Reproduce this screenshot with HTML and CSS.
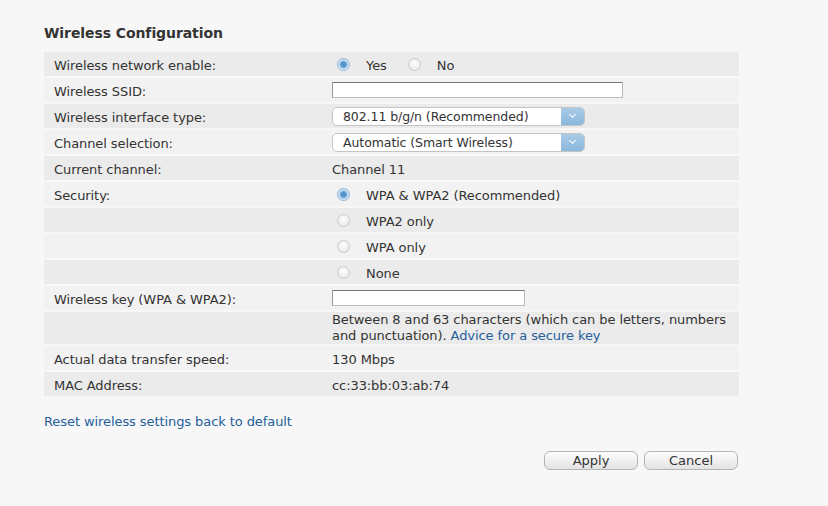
FILE: index.html
```html
<!DOCTYPE html>
<html lang="en">
<head>
    <meta charset="UTF-8">
    <title>Wireless Configuration</title>
    <link rel="stylesheet" href="styles.css">
</head>
<body>
    <div class="page">
        <h2>Wireless Configuration</h2>
        <div class="settings">
            <div class="row dark">
                <div class="label">Wireless network enable:</div>
                <div class="value">
                    <span class="radio on"></span><span class="opt">Yes</span>
                    <span class="radio"></span><span class="opt">No</span>
                </div>
            </div>
            <div class="row">
                <div class="label">Wireless SSID:</div>
                <div class="value"><span class="input ssid"></span></div>
            </div>
            <div class="row dark">
                <div class="label">Wireless interface type:</div>
                <div class="value">
                    <span class="select"><span class="select-text">802.11 b/g/n (Recommended)</span><span class="select-btn"></span></span>
                </div>
            </div>
            <div class="row">
                <div class="label">Channel selection:</div>
                <div class="value">
                    <span class="select"><span class="select-text">Automatic (Smart Wireless)</span><span class="select-btn"></span></span>
                </div>
            </div>
            <div class="row dark">
                <div class="label">Current channel:</div>
                <div class="value">Channel 11</div>
            </div>
            <div class="row">
                <div class="label">Security:</div>
                <div class="value"><span class="radio on"></span><span class="opt">WPA &amp; WPA2 (Recommended)</span></div>
            </div>
            <div class="row dark">
                <div class="label"></div>
                <div class="value"><span class="radio"></span><span class="opt">WPA2 only</span></div>
            </div>
            <div class="row">
                <div class="label"></div>
                <div class="value"><span class="radio"></span><span class="opt">WPA only</span></div>
            </div>
            <div class="row dark">
                <div class="label"></div>
                <div class="value"><span class="radio"></span><span class="opt">None</span></div>
            </div>
            <div class="row">
                <div class="label">Wireless key (WPA &amp; WPA2):</div>
                <div class="value"><span class="input key"></span></div>
            </div>
            <div class="row dark tall">
                <div class="label"></div>
                <div class="value">Between 8 and 63 characters (which can be letters, numbers and punctuation). <a href="#">Advice for a secure key</a></div>
            </div>
            <div class="row">
                <div class="label">Actual data transfer speed:</div>
                <div class="value">130 Mbps</div>
            </div>
            <div class="row dark">
                <div class="label">MAC Address:</div>
                <div class="value">cc:33:bb:03:ab:74</div>
            </div>
        </div>
        <a class="reset" href="#">Reset wireless settings back to default</a>
        <div class="buttons">
            <button>Apply</button>
            <button>Cancel</button>
        </div>
    </div>
</body>
</html>
```

FILE: styles.css
```css
body {
    margin: 0;
    background-color: #f7f7f7;
    font-family: "DejaVu Sans", Verdana, sans-serif;
    font-size: 13px;
    letter-spacing: -0.08px;
    color: #333;
}
.page {
    width: 695px;
    padding: 24px 0 0 44px;
}
h2 {
    font-size: 14px;
    line-height: 18px;
    margin: 0 0 10px 0;
    color: #333;
}
.row {
    display: flex;
    align-items: center;
    min-height: 22px;
    padding-top: 2px;
    margin-bottom: 2px;
    background-color: #f2f2f2;
}
.row.dark {
    background-color: #ebebeb;
}
.row.tall {
    min-height: 32px;
    padding-top: 0;
    line-height: 16px;
}
.label {
    width: 278px;
    padding-left: 10px;
}
.value {
    flex: 1;
    display: flex;
    align-items: center;
    flex-wrap: wrap;
}
.row.tall .value {
    display: block;
}
a {
    color: #24609a;
    text-decoration: none;
}
.radio {
    width: 13px;
    height: 13px;
    border-radius: 50%;
    margin-left: 5px;
    margin-top: -2px;
    background: radial-gradient(circle at 50% 40%, #ffffff 0, #ececec 55%, #d4d4d4 100%);
    box-shadow: inset 0 0 0 1px #cdcdcd;
}
.radio.on {
    background: radial-gradient(circle at 50% 50%, #4f8fc7 0, #5c9ad0 30%, #cfe2f2 48%, #a9c9e6 100%);
    box-shadow: inset 0 0 0 1px #9fc0de;
}
.opt {
    margin-left: 16px;
    margin-right: 16px;
}
.input {
    display: block;
    height: 14px;
    margin-top: -2px;
    background-color: #fff;
    border: 1px solid #bbb;
    border-top-color: #777;
    border-left-color: #999;
}
.input.ssid {
    width: 289px;
}
.input.key {
    width: 191px;
}
.select {
    display: flex;
    width: 253px;
    height: 19px;
    margin-top: -1px;
    background-color: #fff;
    border: 1px solid #c4c4c4;
    border-radius: 5px;
    box-sizing: border-box;
    overflow: hidden;
    font-size: 12.5px;
    line-height: 17px;
}
.select-text {
    flex: 1;
    padding-left: 10px;
}
.select-btn {
    width: 23px;
    position: relative;
    background: linear-gradient(#a9cbe6, #8ab7dc);
}
.select-btn::after {
    content: "";
    position: absolute;
    left: 9px;
    top: 4px;
    width: 4px;
    height: 4px;
    border-right: 1.5px solid #fff;
    border-bottom: 1.5px solid #fff;
    transform: rotate(45deg);
}
.reset {
    display: block;
    margin-top: 18px;
    line-height: 16px;
}
.buttons {
    display: flex;
    justify-content: flex-end;
    gap: 6px;
    margin-top: 21px;
    padding-right: 1px;
}
button {
    width: 94px;
    height: 19px;
    font-family: "DejaVu Sans", Verdana, sans-serif;
    font-size: 13px;
    color: #333;
    padding: 0;
    border: 1px solid #b5b5b5;
    border-radius: 6px;
    background: linear-gradient(#fdfdfd, #f1f1f1 50%, #e2e2e2);
}
```
